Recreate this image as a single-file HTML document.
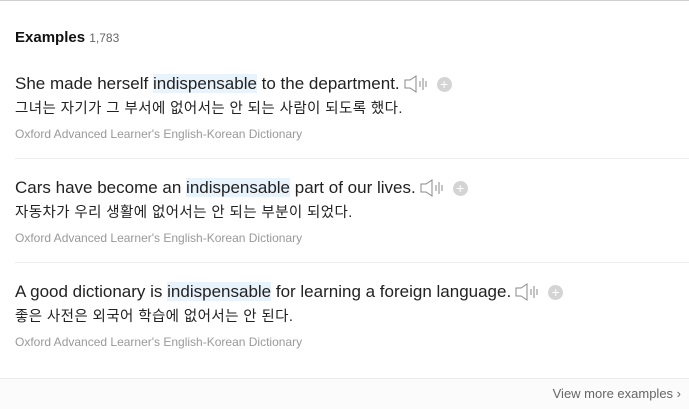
<!DOCTYPE html>
<html><head><meta charset="utf-8"><style>
body{margin:0;width:689px;height:409px;background:#fff;font-family:"Liberation Sans","Noto Sans CJK KR",sans-serif;position:relative;overflow:hidden}
.top{position:absolute;left:0;right:0;top:0;height:1px;background:#d0d0d0}
.h{position:absolute;left:15px;top:29px;font-size:15px;font-weight:bold;color:#111}
.h span{font-weight:normal;font-size:12px;color:#666}
.ex{position:absolute;left:15px;right:0;height:104px}
.en{position:absolute;left:0;top:1px;font-size:17px;color:#222;white-space:nowrap;line-height:22px}
.en b{font-weight:normal;background:#e8f3fc}
.ko{position:absolute;left:0;top:28px;font-size:14.5px;letter-spacing:0.4px;color:#222;line-height:18px;white-space:nowrap}
.src{position:absolute;left:0;top:55px;font-size:12px;color:#999;white-space:nowrap}
.sep{position:absolute;left:0;right:0;top:86px;height:1px;background:#ececec}
svg{vertical-align:-4px;margin-left:4px}
.plus{display:inline-block;width:15px;height:15px;border-radius:50%;background:#d4d4d4;color:#fff;font-size:14px;line-height:15px;text-align:center;vertical-align:0px;margin-left:9px}
.foot{position:absolute;left:0;right:0;top:378px;bottom:0;background:#fbfbfb;border-top:1px solid #ececec}
.more{position:absolute;right:8px;top:7px;font-size:13px;color:#666}
</style></head><body>
<div class="top"></div>
<div class="h">Examples <span>1,783</span></div>

<div class="ex" style="top:72px">
<div class="en">She made herself <b>indispensable</b> to the department.<svg width="24" height="18" viewBox="0 0 24 18"><path d="M1 5h5l6-4v16l-6-4H1z" fill="none" stroke="#888" stroke-width="1"/><path d="M16 6v6M19 3v12M22 6v6" stroke="#888" stroke-width="1"/></svg><span class="plus">+</span></div>
<div class="ko">그녀는 자기가 그 부서에 없어서는 안 되는 사람이 되도록 했다.</div>
<div class="src">Oxford Advanced Learner's English-Korean Dictionary</div>
<div class="sep"></div>
</div>

<div class="ex" style="top:176px">
<div class="en">Cars have become an <b>indispensable</b> part of our lives.<svg width="24" height="18" viewBox="0 0 24 18"><path d="M1 5h5l6-4v16l-6-4H1z" fill="none" stroke="#888" stroke-width="1"/><path d="M16 6v6M19 3v12M22 6v6" stroke="#888" stroke-width="1"/></svg><span class="plus">+</span></div>
<div class="ko">자동차가 우리 생활에 없어서는 안 되는 부분이 되었다.</div>
<div class="src">Oxford Advanced Learner's English-Korean Dictionary</div>
<div class="sep"></div>
</div>

<div class="ex" style="top:280px">
<div class="en">A good dictionary is <b>indispensable</b> for learning a foreign language.<svg width="24" height="18" viewBox="0 0 24 18"><path d="M1 5h5l6-4v16l-6-4H1z" fill="none" stroke="#888" stroke-width="1"/><path d="M16 6v6M19 3v12M22 6v6" stroke="#888" stroke-width="1"/></svg><span class="plus">+</span></div>
<div class="ko">좋은 사전은 외국어 학습에 없어서는 안 된다.</div>
<div class="src">Oxford Advanced Learner's English-Korean Dictionary</div>
</div>

<div class="foot"><div class="more">View more examples ›</div></div>
</body></html>
